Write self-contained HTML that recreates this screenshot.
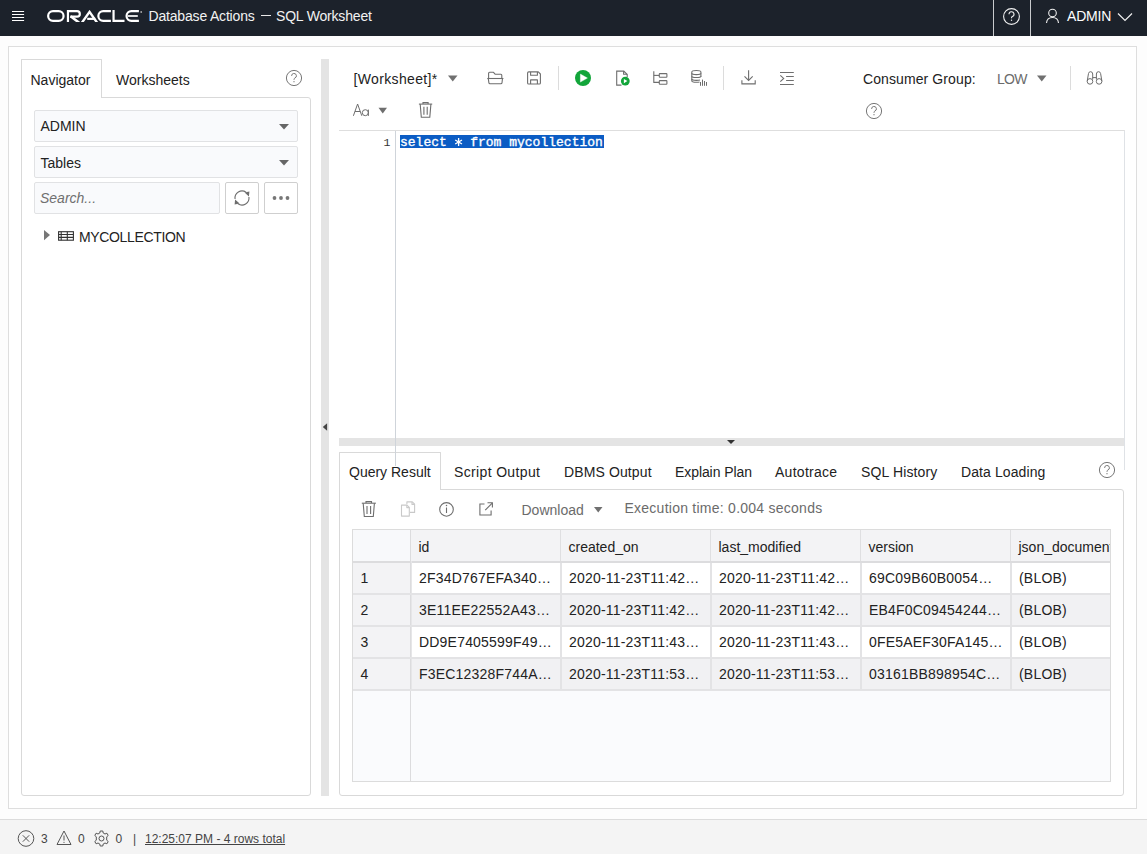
<!DOCTYPE html>
<html><head><meta charset="utf-8">
<style>
*{box-sizing:border-box;margin:0;padding:0}
html,body{width:1147px;height:854px;overflow:hidden;background:#fdfdfd;font-family:"Liberation Sans",sans-serif;color:#222}
body{position:relative}
.a{position:absolute}
.txt{white-space:nowrap;line-height:1}
#hdr{left:0;top:0;width:1147px;height:36px;background:#1c222b}
#outer{left:8px;top:46px;width:1129px;height:763px;border:1px solid #dedede;background:#fff}
#status{left:0;top:819px;width:1147px;height:35px;background:#f4f4f4;border-top:1px solid #dcdcdc}
.sel{background:#f9fafc;border:1px solid #e1e2e4;border-radius:2px}
.btn{background:#fff;border:1px solid #cfcfcf;border-radius:2px}
.ic{stroke:#707070;fill:none;stroke-width:1.1}
</style></head><body>
<!-- HEADER -->
<div id="hdr" class="a">
  <svg class="a" style="left:12px;top:10px" width="13" height="12" viewBox="12 10 13 12"><g stroke="#fff" stroke-width="1.1"><path d="M12 11.5 H24.1 M12 14.5 H24.1 M12 17.5 H24.1 M12 20.5 H24.1"/></g></svg>
  <svg class="a" style="left:46px;top:9px" width="100" height="15" viewBox="46 9 100 15">
    <defs><clipPath id="lc"><rect x="46" y="9.9" width="100" height="12.05"/></clipPath></defs><g fill="none" stroke="#fff" stroke-width="2.2" clip-path="url(#lc)">
      <path d="M53 11.15 H58.7 A4.85 4.85 0 0 1 58.7 20.85 H53 A4.85 4.85 0 0 1 53 11.15 Z"/>
      <path d="M67.95 22 V11.15 H77.1 A2.72 2.72 0 0 1 77.1 16.6 H70.3"/>
      <path d="M70.6 16.3 L79.2 22.8" stroke-width="2.5"/>
      <path d="M81.8 22.8 L89.55 11.9 L97.2 22.8" stroke-width="2.4"/>
      <path d="M87.2 18.85 H95.2"/>
      <path d="M110.9 11.15 H103.2 A4.85 4.85 0 0 0 103.2 20.85 H110.9"/>
      <path d="M113.55 10 V20.85 H124.5"/>
      <path d="M138.9 11.15 H131.4 A4.85 4.85 0 0 0 131.4 20.85 H138.9"/>
      <path d="M127.8 16 H137.8" stroke-width="1.7"/>
    </g>
    <circle cx="141.2" cy="12" r="0.9" fill="#aaa"/>
  </svg>
  <div class="a txt" style="left:148.5px;top:9px;color:#f2f2f2;font-size:14px;letter-spacing:-0.18px">Database Actions</div>
  <div class="a" style="left:261px;top:15px;width:10px;height:1.2px;background:#e8e8e8"></div>
  <div class="a txt" style="left:276px;top:9px;color:#f2f2f2;font-size:14px;letter-spacing:-0.18px">SQL Worksheet</div>
  <div class="a" style="left:993px;top:0;width:1px;height:36px;background:#c9cbce"></div>
  <div class="a" style="left:1030px;top:0;width:1px;height:36px;background:#c9cbce"></div>
  <svg class="a" style="left:1002px;top:7px" width="19" height="19" viewBox="0 0 19 19"><circle cx="9.5" cy="9.5" r="7.9" fill="none" stroke="#f0f0f0" stroke-width="1.1"/><path d="M7 7.3 A2.5 2.5 0 1 1 10.3 9.6 C9.6 9.9 9.5 10.4 9.5 11.3" fill="none" stroke="#f0f0f0" stroke-width="1.1"/><circle cx="9.5" cy="13.3" r="0.7" fill="#f0f0f0"/></svg>
  <svg class="a" style="left:1045px;top:8px" width="15" height="16" viewBox="0 0 15 16"><circle cx="7.5" cy="5" r="3.8" fill="none" stroke="#f0f0f0" stroke-width="1.1"/><path d="M1.5 15 C1.8 11 4.5 9.5 7.5 9.5 C10.5 9.5 13.2 11 13.5 15" fill="none" stroke="#f0f0f0" stroke-width="1.1"/></svg>
  <div class="a txt" style="left:1067px;top:9px;color:#fff;font-size:14px;letter-spacing:-0.2px">ADMIN</div>
  <svg class="a" style="left:1117px;top:12px" width="16" height="10" viewBox="0 0 16 10"><path d="M1 1.5 L8 8.5 L15 1.5" fill="none" stroke="#f0f0f0" stroke-width="1.2"/></svg>
</div>

<div id="outer" class="a"></div>

<!-- NAVIGATOR -->
<div class="a" style="left:21px;top:97px;width:290px;height:699px;border:1px solid #d9d9d9;border-radius:0 3px 3px 3px;background:#fff"></div>
<div class="a" style="left:21px;top:59px;width:81px;height:39px;border:1px solid #d9d9d9;border-bottom:none;border-radius:1px 1px 0 0;background:#fff"></div>
<div class="a txt" style="left:30.5px;top:73px;font-size:14px">Navigator</div>
<div class="a txt" style="left:116px;top:73px;font-size:14px">Worksheets</div>
<svg class="a" style="left:285px;top:69px" width="18" height="18" viewBox="0 0 18 18"><circle cx="9" cy="9" r="7.6" fill="none" stroke="#777" stroke-width="1"/><path d="M6.6 6.9 A2.4 2.4 0 1 1 9.8 9.1 C9.1 9.4 9 9.9 9 10.8" fill="none" stroke="#777" stroke-width="1"/><circle cx="9" cy="12.7" r="0.65" fill="#777"/></svg>

<div class="a sel" style="left:34px;top:110px;width:264px;height:32px"></div>
<div class="a txt" style="left:40.5px;top:119px;font-size:14px">ADMIN</div>
<svg class="a" style="left:279px;top:124px" width="10" height="6" viewBox="0 0 10 6"><path d="M0 0 H10 L5 5.5Z" fill="#666"/></svg>
<div class="a sel" style="left:34px;top:146px;width:264px;height:32px"></div>
<div class="a txt" style="left:40.5px;top:156px;font-size:14px">Tables</div>
<svg class="a" style="left:279px;top:160px" width="10" height="6" viewBox="0 0 10 6"><path d="M0 0 H10 L5 5.5Z" fill="#666"/></svg>
<div class="a sel" style="left:34px;top:182px;width:186px;height:32px"></div>
<div class="a txt" style="left:40px;top:191px;font-size:14px;font-style:italic;color:#707070">Search...</div>
<div class="a btn" style="left:225px;top:182px;width:34px;height:32px"></div>
<svg class="a" style="left:232px;top:188px" width="20" height="20" viewBox="232 188 20 20"><g fill="none" stroke="#6e6e6e" stroke-width="1.1"><path d="M235.07 198.97 A7 7 0 0 1 246.02 192.27"/><path d="M248.93 197.03 A7 7 0 0 1 237.98 203.73"/></g><path d="M244.6 192.4 L249.4 191.4 L248.9 196.5Z M239.6 203.6 L234.6 204.6 L235.1 199.5Z" fill="#6e6e6e"/></svg>
<div class="a btn" style="left:264px;top:182px;width:34px;height:32px"></div>
<svg class="a" style="left:272px;top:194px" width="18" height="8" viewBox="0 0 18 8"><circle cx="2.5" cy="4" r="1.9" fill="#777"/><circle cx="9" cy="4" r="1.9" fill="#777"/><circle cx="15.5" cy="4" r="1.9" fill="#777"/></svg>

<svg class="a" style="left:44px;top:230px" width="7" height="11" viewBox="44 230 7 11"><path d="M44 230 L50 235.1 L44 240.2Z" fill="#777"/></svg>
<svg class="a" style="left:57px;top:230px" width="18" height="12" viewBox="57 230 18 12"><g fill="none" stroke="#333" stroke-width="1.1"><rect x="58.6" y="231.7" width="14.8" height="8.5"/><path d="M58.6 234.5 H73.4 M58.6 237.4 H73.4 M61.2 231.7 V240.2 M67.3 231.7 V240.2"/></g></svg>
<div class="a txt" style="left:79px;top:230px;font-size:14px;letter-spacing:-0.35px">MYCOLLECTION</div>

<!-- vertical splitter -->
<div class="a" style="left:321px;top:59px;width:8px;height:737px;background:#e4e4e4"></div>
<svg class="a" style="left:322px;top:423px" width="6" height="9" viewBox="0 0 6 9"><path d="M5.1 0.2 V7.8 L0.8 4Z" fill="#444"/></svg>

<!-- TOOLBAR -->
<div class="a txt" style="left:353.5px;top:72px;font-size:14px;letter-spacing:0.35px">[Worksheet]*</div>
<svg class="a" style="left:448px;top:75px" width="10" height="7" viewBox="0 0 10 7"><path d="M0 0.5 H9.5 L4.75 6.5Z" fill="#707070"/></svg>
<div class="a" style="left:558px;top:66px;width:1px;height:24px;background:#dcdcdc"></div>
<div class="a" style="left:723px;top:66px;width:1px;height:24px;background:#dcdcdc"></div>
<div class="a" style="left:1070px;top:66px;width:1px;height:24px;background:#dcdcdc"></div>
<svg class="a" style="left:575px;top:70px" width="16" height="16" viewBox="0 0 16 16"><circle cx="8" cy="8" r="8" fill="#12a53a"/><path d="M5.4 4.1 L12.4 8.05 L5.4 12.1Z" fill="#fff" stroke="#fff" stroke-width="0.4" stroke-linejoin="round"/></svg>
<div class="a txt" style="left:863px;top:72px;font-size:14px;letter-spacing:0.1px">Consumer Group:</div>
<div class="a txt" style="left:997px;top:72px;font-size:14px;color:#6b6b6b;letter-spacing:-0.7px">LOW</div>
<svg class="a" style="left:1037px;top:75px" width="10" height="7" viewBox="0 0 10 7"><path d="M0 0.5 H9.5 L4.75 6.5Z" fill="#707070"/></svg>
<svg class="a" style="left:865px;top:102px" width="18" height="18" viewBox="0 0 18 18"><circle cx="9" cy="9" r="7.6" fill="none" stroke="#777" stroke-width="1"/><path d="M6.6 6.9 A2.4 2.4 0 1 1 9.8 9.1 C9.1 9.4 9 9.9 9 10.8" fill="none" stroke="#777" stroke-width="1"/><circle cx="9" cy="12.7" r="0.65" fill="#777"/></svg>


<!-- toolbar icons -->
<svg class="a" style="left:486px;top:71px" width="19" height="14" viewBox="486 71 19 14"><g fill="none" stroke="#6e6e6e" stroke-width="1.1" stroke-linejoin="round">
<path d="M488.6 78.4 V73.3 Q488.6 72.3 489.6 72.3 H493.5 L495.3 74.3 H500.9 Q501.8 74.3 501.8 75.3 V78.4"/>
<path d="M487.3 78.5 H503.4"/>
<path d="M488.3 78.5 L488.9 82.8 Q489.1 83.7 490 83.7 H500.9 Q501.8 83.7 502 82.8 L502.5 78.5"/>
</g></svg>
<svg class="a" style="left:526px;top:70px" width="16" height="16" viewBox="526 70 16 16"><g fill="none" stroke="#6e6e6e" stroke-width="1.1" stroke-linejoin="round">
<path d="M528.7 71.9 H538.3 L540.4 74 V82.9 Q540.4 84 539.3 84 H528.7 Q527.6 84 527.6 82.9 V73 Q527.6 71.9 528.7 71.9Z"/>
<path d="M530.6 71.9 V75.2 H537.4 V71.9"/>
<path d="M530.6 84 V79.9 H537.4 V84"/>
</g></svg>
<svg class="a" style="left:615px;top:69px" width="16" height="18" viewBox="615 69 16 18"><g fill="none" stroke="#6e6e6e" stroke-width="1.1" stroke-linejoin="round">
<path d="M621.5 85.1 H616.7 V71.1 H623.8 L627.2 74.5 V77" stroke-linejoin="miter"/>
<path d="M623.6 71.1 V74.3 H627.2"/>
</g><circle cx="625.3" cy="81.1" r="4.4" fill="#12a53a"/><path d="M623.9 78.9 L627.4 81.1 L623.9 83.3Z" fill="#fff"/></svg>
<svg class="a" style="left:652px;top:70px" width="17" height="16" viewBox="652 70 17 16"><g fill="none" stroke="#6e6e6e" stroke-width="1.1" stroke-linejoin="round">
<path d="M653.8 71.2 V82.4 H659"/><path d="M653.8 75.4 H659"/>
<rect x="659.3" y="73.6" width="7.6" height="3.7" rx="0.6"/>
<rect x="659.3" y="80.6" width="7.6" height="3.7" rx="0.6"/>
</g></svg>
<svg class="a" style="left:690px;top:69px" width="19" height="18" viewBox="690 69 19 18"><g fill="none" stroke="#6e6e6e" stroke-width="1.1">
<path d="M691.8 72 Q691.8 70.5 696.35 70.5 Q700.9 70.5 700.9 72 V77"/>
<path d="M691.8 72 V80.8 Q691.8 82.3 696.35 82.3 Q698.5 82.3 699.5 82"/>
<path d="M691.8 73.3 Q691.8 74.6 696.35 74.6 Q700.9 74.6 700.9 73.3"/>
<path d="M691.8 76.2 Q691.8 77.5 696.35 77.5 Q700.9 77.5 700.9 76.2"/>
<path d="M691.8 79.1 Q691.8 80.4 696.35 80.4 Q699 80.4 700 80"/>
</g><g stroke="#6e6e6e" stroke-width="1"><path d="M700.5 82 V85.8 M702.5 79.6 V85.8 M704.5 81 V85.8 M706.5 82 V85.8"/></g></svg>
<svg class="a" style="left:740px;top:69px" width="17" height="17" viewBox="740 69 17 17"><g fill="none" stroke="#6e6e6e" stroke-width="1.1" stroke-linejoin="miter">
<path d="M748.6 70.2 V80.3"/><path d="M744.5 76.3 L748.6 80.4 L752.7 76.3"/>
<path d="M741.9 80.2 V83.9 H755.2 V80.2"/>
</g></svg>
<svg class="a" style="left:778px;top:70px" width="17" height="16" viewBox="778 70 17 16"><g fill="none" stroke="#6e6e6e" stroke-width="1.1">
<path d="M780 72.5 H793.8 M786.1 76.5 H793.8 M786.1 80.5 H793.8 M780 84.5 H793.8"/>
<path d="M780.3 75.3 L783.7 78.4 L780.3 81.6"/>
</g></svg>
<svg class="a" style="left:1085px;top:70px" width="19" height="16" viewBox="1085 70 19 16"><g fill="none" stroke="#6e6e6e" stroke-width="1">
<circle cx="1090" cy="81.4" r="2.8"/><circle cx="1099.1" cy="81.4" r="2.8"/>
<path d="M1087.2 81.2 L1088.5 73.5 Q1088.9 71.7 1090.5 71.7 Q1092.7 71.7 1092.7 74 V79.5"/>
<path d="M1101.9 81.2 L1100.6 73.5 Q1100.2 71.7 1098.6 71.7 Q1096.4 71.7 1096.4 74 V79.5"/>
<path d="M1092.7 77.6 H1096.4"/>
</g></svg>
<!-- Aa and trash -->
<svg class="a" style="left:352px;top:102px" width="19" height="16" viewBox="352 102 19 16"><g fill="none" stroke="#6e6e6e" stroke-width="1">
<path d="M353.4 115.8 L357.6 104 L361.8 115.8 M355 111.5 H360.2"/>
<circle cx="365.3" cy="112.7" r="3"/><path d="M368.4 109.6 V115.9"/>
</g></svg>
<svg class="a" style="left:378px;top:107px" width="10" height="7" viewBox="0 0 10 7"><path d="M0.5 0.8 H9 L4.75 6.5Z" fill="#6e6e6e"/></svg>
<svg class="a" style="left:417px;top:101px" width="17" height="18" viewBox="417 101 17 18"><g fill="none" stroke="#6e6e6e" stroke-width="1.1">
<path d="M418.9 104.1 H432.2"/><path d="M423 104 V102.6 H428.1 V104"/>
<path d="M420.2 104.1 L421.3 117.2 H429.8 L430.9 104.1"/>
<path d="M423.9 106.8 V114.7 M427.2 106.8 V114.7"/>
</g></svg>
<!-- EDITOR -->
<div class="a" style="left:339px;top:130px;width:786px;height:308px;border-top:1px solid #dedede;border-right:1px solid #e3e3e3;background:#fff"></div>
<div class="a txt" style="left:383.5px;top:136.6px;font-size:11.5px;font-family:'Liberation Mono',monospace;color:#333">1</div>
<div class="a" style="left:400px;top:135px;width:204px;height:13px;background:#0b5cc4"></div>
<div class="a txt" style="left:400px;top:136px;font-size:13px;font-family:'Liberation Mono',monospace;color:#fff;-webkit-text-stroke:0.35px #fff">select &nbsp; from mycollection</div>
<svg class="a" style="left:454px;top:137px" width="10" height="10" viewBox="454 137 10 10"><path d="M458.6 138.1 V145.9 M455.2 140.05 L462 143.95 M455.2 143.95 L462 140.05" stroke="#fff" stroke-width="1.3"/></svg>

<!-- horizontal splitter -->
<div class="a" style="left:339px;top:438px;width:786px;height:8px;background:#e4e4e4"></div>
<svg class="a" style="left:727px;top:440px" width="8" height="5" viewBox="0 0 8 5"><path d="M0 0 H8 L4 4Z" fill="#333"/></svg>

<!-- RESULTS -->
<div class="a" style="left:339px;top:489px;width:785px;height:307px;border:1px solid #d9d9d9;border-radius:0 3px 3px 3px;background:#fff"></div>
<div class="a" style="left:339px;top:452px;width:102px;height:38px;border:1px solid #d9d9d9;border-bottom:none;border-radius:1px 1px 0 0;background:#fff"></div>
<div class="a txt" style="left:349px;top:465px;font-size:14px">Query Result</div>
<div class="a txt" style="left:454px;top:465px;font-size:14px;letter-spacing:0.35px">Script Output</div>
<div class="a txt" style="left:564px;top:465px;font-size:14px;letter-spacing:0.12px">DBMS Output</div>
<div class="a txt" style="left:675px;top:465px;font-size:14px;letter-spacing:-0.08px">Explain Plan</div>
<div class="a txt" style="left:775px;top:465px;font-size:14px;letter-spacing:0.27px">Autotrace</div>
<div class="a txt" style="left:861px;top:465px;font-size:14px;letter-spacing:0.14px">SQL History</div>
<div class="a txt" style="left:961px;top:465px;font-size:14px;letter-spacing:0.1px">Data Loading</div>
<svg class="a" style="left:1098px;top:461px" width="18" height="18" viewBox="0 0 18 18"><circle cx="9" cy="9" r="7.6" fill="none" stroke="#777" stroke-width="1"/><path d="M6.6 6.9 A2.4 2.4 0 1 1 9.8 9.1 C9.1 9.4 9 9.9 9 10.8" fill="none" stroke="#777" stroke-width="1"/><circle cx="9" cy="12.7" r="0.65" fill="#777"/></svg>

<!-- results toolbar icons -->
<svg class="a" style="left:360px;top:500px" width="17" height="18" viewBox="360 500 17 18"><g fill="none" stroke="#6e6e6e" stroke-width="1.1">
<path d="M361.8 503.2 H375.9"/><path d="M366 503.1 V501.6 H371.5 V503.1"/>
<path d="M363.2 503.2 L364.3 516.5 H373.3 L374.4 503.2"/>
<path d="M367 506 V514 M370.6 506 V514"/>
</g></svg>
<svg class="a" style="left:399px;top:500px" width="17" height="18" viewBox="399 500 17 18"><g fill="none" stroke="#c9c9c9" stroke-width="1.1" stroke-linejoin="round">
<path d="M406.9 504.3 V501.9 H412.3 L414.6 504.2 V512.4 H410"/><path d="M412 501.9 V504.4 H414.6"/>
<path d="M401.5 516.1 V505.1 H407 L409.3 507.4 V516.1Z"/><path d="M406.8 505.1 V507.6 H409.3"/>
</g></svg>
<svg class="a" style="left:438px;top:501px" width="17" height="17" viewBox="438 501 17 17"><g fill="none" stroke="#6e6e6e" stroke-width="1.1">
<circle cx="446.5" cy="509.4" r="6.8"/><path d="M446.5 507.5 V513"/></g><circle cx="446.5" cy="505.4" r="0.75" fill="#6e6e6e"/></svg>
<svg class="a" style="left:477px;top:501px" width="17" height="16" viewBox="477 501 17 16"><g fill="none" stroke="#6e6e6e" stroke-width="1.1">
<path d="M484.5 504 H479.9 V515 H491.1 V510.5"/><path d="M485.2 510.2 L492.2 503.2"/><path d="M487.5 502.8 H492.4 V507.6"/>
</g></svg>

<div class="a txt" style="left:521.5px;top:503px;font-size:14px;color:#6b6b6b">Download</div>
<svg class="a" style="left:594px;top:507px" width="9" height="6" viewBox="0 0 9 6"><path d="M0 0 H8.5 L4.25 5.5Z" fill="#707070"/></svg>
<div class="a txt" style="left:624.5px;top:501px;font-size:14px;color:#6b6b6b;letter-spacing:0.25px">Execution time: 0.004 seconds</div>

<div id="grid" class="a" style="left:352px;top:529px;width:759px;height:253px;border:1px solid #dcdcdc;background:#fafbfd;overflow:hidden">
<div class="a" style="left:0px;top:0px;width:57px;height:31px;background:#f8f9fb"></div>
<div class="a" style="left:58px;top:0px;width:699px;height:31px;background:#f3f3f5"></div>
<div class="a" style="left:207px;top:0px;width:1px;height:31px;background:#dfdfe1"></div>
<div class="a" style="left:357px;top:0px;width:1px;height:31px;background:#dfdfe1"></div>
<div class="a" style="left:507px;top:0px;width:1px;height:31px;background:#dfdfe1"></div>
<div class="a" style="left:657px;top:0px;width:1px;height:31px;background:#dfdfe1"></div>
<div class="a" style="left:0px;top:31px;width:757px;height:2px;background:#dcdcde"></div>
<div class="a" style="left:57px;top:0px;width:1px;height:251px;background:#dcdcde"></div>
<div class="a" style="left:58px;top:31px;width:1px;height:128px;background:#e6e6e8"></div>
<div class="a" style="left:0px;top:33px;width:57px;height:30px;background:#f3f3f5"></div>
<div class="a" style="left:59px;top:33px;width:698px;height:30px;background:#ffffff"></div>
<div class="a" style="left:0px;top:63px;width:757px;height:2px;background:#e3e3e5"></div>
<div class="a" style="left:207px;top:33px;width:2px;height:30px;background:#e3e3e5"></div>
<div class="a" style="left:357px;top:33px;width:2px;height:30px;background:#e3e3e5"></div>
<div class="a" style="left:507px;top:33px;width:2px;height:30px;background:#e3e3e5"></div>
<div class="a" style="left:657px;top:33px;width:2px;height:30px;background:#e3e3e5"></div>
<div class="a txt" style="left:7.5px;top:41px;font-size:14px">1</div>
<div class="a txt" style="left:66px;top:41px;font-size:14px;letter-spacing:0.2px">2F34D767EFA340…</div>
<div class="a txt" style="left:216px;top:41px;font-size:14px;letter-spacing:0.2px">2020-11-23T11:42…</div>
<div class="a txt" style="left:366px;top:41px;font-size:14px;letter-spacing:0.2px">2020-11-23T11:42…</div>
<div class="a txt" style="left:516px;top:41px;font-size:14px;letter-spacing:0.2px">69C09B60B0054…</div>
<div class="a txt" style="left:666px;top:41px;font-size:14px;letter-spacing:0.2px">(BLOB)</div>
<div class="a" style="left:0px;top:65px;width:57px;height:30px;background:#f3f3f5"></div>
<div class="a" style="left:59px;top:65px;width:698px;height:30px;background:#f1f1f3"></div>
<div class="a" style="left:0px;top:95px;width:757px;height:2px;background:#e3e3e5"></div>
<div class="a" style="left:207px;top:65px;width:2px;height:30px;background:#e3e3e5"></div>
<div class="a" style="left:357px;top:65px;width:2px;height:30px;background:#e3e3e5"></div>
<div class="a" style="left:507px;top:65px;width:2px;height:30px;background:#e3e3e5"></div>
<div class="a" style="left:657px;top:65px;width:2px;height:30px;background:#e3e3e5"></div>
<div class="a txt" style="left:7.5px;top:73px;font-size:14px">2</div>
<div class="a txt" style="left:66px;top:73px;font-size:14px;letter-spacing:0.2px">3E11EE22552A43…</div>
<div class="a txt" style="left:216px;top:73px;font-size:14px;letter-spacing:0.2px">2020-11-23T11:42…</div>
<div class="a txt" style="left:366px;top:73px;font-size:14px;letter-spacing:0.2px">2020-11-23T11:42…</div>
<div class="a txt" style="left:516px;top:73px;font-size:14px;letter-spacing:0.2px">EB4F0C09454244…</div>
<div class="a txt" style="left:666px;top:73px;font-size:14px;letter-spacing:0.2px">(BLOB)</div>
<div class="a" style="left:0px;top:97px;width:57px;height:30px;background:#f3f3f5"></div>
<div class="a" style="left:59px;top:97px;width:698px;height:30px;background:#ffffff"></div>
<div class="a" style="left:0px;top:127px;width:757px;height:2px;background:#e3e3e5"></div>
<div class="a" style="left:207px;top:97px;width:2px;height:30px;background:#e3e3e5"></div>
<div class="a" style="left:357px;top:97px;width:2px;height:30px;background:#e3e3e5"></div>
<div class="a" style="left:507px;top:97px;width:2px;height:30px;background:#e3e3e5"></div>
<div class="a" style="left:657px;top:97px;width:2px;height:30px;background:#e3e3e5"></div>
<div class="a txt" style="left:7.5px;top:105px;font-size:14px">3</div>
<div class="a txt" style="left:66px;top:105px;font-size:14px;letter-spacing:0.2px">DD9E7405599F49…</div>
<div class="a txt" style="left:216px;top:105px;font-size:14px;letter-spacing:0.2px">2020-11-23T11:43…</div>
<div class="a txt" style="left:366px;top:105px;font-size:14px;letter-spacing:0.2px">2020-11-23T11:43…</div>
<div class="a txt" style="left:516px;top:105px;font-size:14px;letter-spacing:0.2px">0FE5AEF30FA145…</div>
<div class="a txt" style="left:666px;top:105px;font-size:14px;letter-spacing:0.2px">(BLOB)</div>
<div class="a" style="left:0px;top:129px;width:57px;height:30px;background:#f3f3f5"></div>
<div class="a" style="left:59px;top:129px;width:698px;height:30px;background:#f1f1f3"></div>
<div class="a" style="left:0px;top:159px;width:757px;height:2px;background:#e3e3e5"></div>
<div class="a" style="left:207px;top:129px;width:2px;height:30px;background:#e3e3e5"></div>
<div class="a" style="left:357px;top:129px;width:2px;height:30px;background:#e3e3e5"></div>
<div class="a" style="left:507px;top:129px;width:2px;height:30px;background:#e3e3e5"></div>
<div class="a" style="left:657px;top:129px;width:2px;height:30px;background:#e3e3e5"></div>
<div class="a txt" style="left:7.5px;top:137px;font-size:14px">4</div>
<div class="a txt" style="left:66px;top:137px;font-size:14px;letter-spacing:0.2px">F3EC12328F744A…</div>
<div class="a txt" style="left:216px;top:137px;font-size:14px;letter-spacing:0.2px">2020-11-23T11:53…</div>
<div class="a txt" style="left:366px;top:137px;font-size:14px;letter-spacing:0.2px">2020-11-23T11:53…</div>
<div class="a txt" style="left:516px;top:137px;font-size:14px;letter-spacing:0.2px">03161BB898954C…</div>
<div class="a txt" style="left:666px;top:137px;font-size:14px;letter-spacing:0.2px">(BLOB)</div>
<div class="a txt" style="left:65.5px;top:9.5px;font-size:14px">id</div>
<div class="a txt" style="left:215.5px;top:9.5px;font-size:14px">created_on</div>
<div class="a txt" style="left:365.5px;top:9.5px;font-size:14px">last_modified</div>
<div class="a txt" style="left:515.5px;top:9.5px;font-size:14px">version</div>
<div class="a txt" style="left:665.5px;top:9.5px;font-size:14px">json_document</div>
</div>
<div class="a" style="left:395px;top:131px;width:1px;height:335px;background:#cfd4da"></div>
<div class="a" style="left:1124px;top:131px;width:1px;height:339px;background:#dfe2e6"></div>
<!-- STATUS -->
<div id="status" class="a"></div>
<svg class="a" style="left:17px;top:830px" width="18" height="18" viewBox="0 0 18 18"><circle cx="9" cy="8.5" r="7.8" fill="none" stroke="#555" stroke-width="1"/><path d="M5.8 5.3 L12.2 11.7 M12.2 5.3 L5.8 11.7" stroke="#555" stroke-width="1"/></svg>
<div class="a txt" style="left:41px;top:833px;font-size:12px;color:#444">3</div>
<svg class="a" style="left:56px;top:830px" width="16" height="16" viewBox="0 0 16 16"><path d="M8 1 L15 14.5 H1Z" fill="none" stroke="#555" stroke-width="1"/><path d="M8 5.5 V10.5" stroke="#555" stroke-width="1"/><circle cx="8" cy="12.3" r="0.6" fill="#555"/></svg>
<div class="a txt" style="left:78px;top:833px;font-size:12px;color:#444">0</div>
<svg class="a" style="left:93px;top:830px" width="17" height="17" viewBox="0 0 17 17"><circle cx="8.5" cy="8.5" r="2.5" fill="none" stroke="#555" stroke-width="1"/><path d="M7.2 1 H9.8 L10.2 3 L12 4 L13.9 3.2 L15.2 5.5 L13.7 6.8 V10.2 L15.2 11.5 L13.9 13.8 L12 13 L10.2 14 L9.8 16 H7.2 L6.8 14 L5 13 L3.1 13.8 L1.8 11.5 L3.3 10.2 V6.8 L1.8 5.5 L3.1 3.2 L5 4 L6.8 3Z" fill="none" stroke="#555" stroke-width="1"/></svg>
<div class="a txt" style="left:115.5px;top:833px;font-size:12px;color:#444">0</div>
<div class="a txt" style="left:133px;top:833px;font-size:12px;color:#444">|</div>
<div class="a txt" style="left:145px;top:832.5px;font-size:12px;color:#444;text-decoration:underline">12:25:07 PM - 4 rows total</div>
</body></html>
